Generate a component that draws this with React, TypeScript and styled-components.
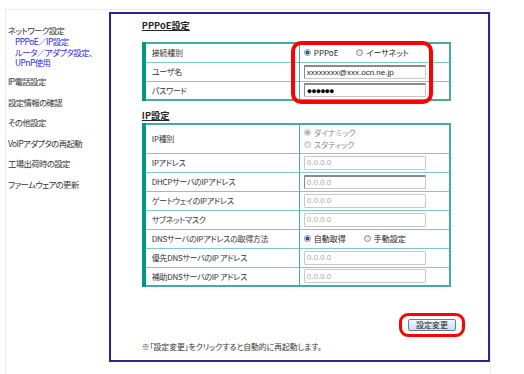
import styled, { createGlobalStyle } from 'styled-components'

const GlobalStyle = createGlobalStyle`
  body {
    margin: 0;
    background: #fff;
    font-family: 'Noto Sans CJK JP', 'DejaVu Sans', sans-serif;
    font-feature-settings: 'palt';
    color: #333;
  }
`

const Frame = styled.div`
  margin: 9px 0 0 5px;
  width: 484px;
  height: 370px;
  border: 1px solid #ececec;
  border-bottom: none;
  display: flex;
  align-items: flex-start;
`

const Sidebar = styled.nav`
  width: 107px;
  padding: 15px 0 0 2px;
  display: flex;
  flex-direction: column;
`

const NavItem = styled.div`
  font-size: 8.4px;
  letter-spacing: -0.6px;
  line-height: 10px;
  height: 10px;
  margin-bottom: 10.6px;
  color: #333;
  white-space: nowrap;
`

const SubNav = styled.div`
  display: flex;
  flex-direction: column;
  padding-left: 7px;
  margin: -9.5px 0 8.5px;
`

const SubLink = styled.a`
  font-size: 8.4px;
  letter-spacing: -0.5px;
  line-height: 10.5px;
  color: #2a2ae8;
  text-decoration: none;
  white-space: nowrap;
`

const Panel = styled.main`
  margin: 2px 0 0 1px;
  width: 371px;
  height: 346px;
  border: 2px solid #28288f;
  padding: 0 0 0 31px;
  display: flex;
  flex-direction: column;
`

const Heading = styled.h2<{ $top: number }>`
  margin: ${({ $top }) => $top}px 0 0;
  height: 12px;
  font-size: 9.2px;
  line-height: 12px;
  font-weight: bold;
  color: #222;
  text-decoration: underline;
`

const TableWrap = styled.div<{ $top: number }>`
  position: relative;
  margin-top: ${({ $top }) => $top}px;
  width: 309px;
`

const Table = styled.table`
  width: 309px;
  border-collapse: collapse;
  table-layout: fixed;
  border-top: 2px solid #45aca5;
  border-right: 2px solid #45aca5;
  border-bottom: 2px solid #45aca5;
  border-left: 4px solid #00968a;
`

const Row = styled.tr<{ $h?: number }>`
  height: ${({ $h }) => $h ?? 19}px;
  border-bottom: 1px solid #7ccbc4;
  &:last-child {
    border-bottom: none;
  }
`

const Label = styled.td`
  width: 147px;
  padding: 0 0 0 6px;
  border-right: 1px solid #45aca5;
  font-size: 8px;
  letter-spacing: -0.3px;
  color: #333;
  white-space: nowrap;
  vertical-align: middle;
`

const Value = styled.td`
  padding: 0 0 0 4px;
  vertical-align: middle;
`

const Field = styled.input<{ $inset?: boolean; $dim?: boolean }>`
  display: block;
  box-sizing: border-box;
  width: 122px;
  height: 14px;
  padding: 0 2px;
  margin: 0;
  font-family: 'Liberation Sans', Arial, sans-serif;
  font-size: 8px;
  color: ${({ $dim }) => ($dim ? '#a8a8a8' : '#222')};
  background: #fff;
  border: 1px solid #c8c8c8;
  border-top-color: ${({ $inset }) => ($inset ? '#8a8a8a' : '#c8c8c8')};
  border-left-color: ${({ $inset }) => ($inset ? '#8a8a8a' : '#c8c8c8')};
  border-top-width: ${({ $inset }) => ($inset ? 2 : 1)}px;
  border-radius: 1px;
  outline: none;
`

const Password = styled(Field)`
  font-size: 9px;
  letter-spacing: -1px;
  color: #000;
  font-weight: bold;
`

const Radios = styled.div<{ $column?: boolean }>`
  display: flex;
  flex-direction: ${({ $column }) => ($column ? 'column' : 'row')};
  gap: ${({ $column }) => ($column ? 2 : 18)}px;
`

const RadioOption = styled.label<{ $disabled?: boolean }>`
  display: flex;
  align-items: center;
  gap: 3px;
  font-size: 8px;
  line-height: 10px;
  color: ${({ $disabled }) => ($disabled ? '#8a8a8a' : '#222')};
  white-space: nowrap;
`

const Dot = styled.span<{ $checked?: boolean; $disabled?: boolean }>`
  box-sizing: border-box;
  width: 7px;
  height: 7px;
  border-radius: 50%;
  border: 1px solid ${({ $disabled }) => ($disabled ? '#c4c4c4' : '#8c8c8c')};
  background: ${({ $checked, $disabled }) =>
    $checked
      ? $disabled
        ? 'radial-gradient(circle, #a8a8a8 0 1.5px, #e6e6e6 2px)'
        : 'radial-gradient(circle, #1e4fa8 0 1.6px, #dfe9f5 2.1px)'
      : 'linear-gradient(#dcdcdc, #f8f8f8)'};
`

const Ring = styled.div`
  position: absolute;
  left: 149px;
  top: -1px;
  width: 142px;
  height: 63px;
  box-sizing: border-box;
  border: 4px solid #f00;
  border-radius: 10px;
  pointer-events: none;
`

const Actions = styled.div`
  margin-top: 26px;
  padding-right: 23px;
  display: flex;
  justify-content: flex-end;
`

const ButtonRing = styled.div`
  box-sizing: border-box;
  width: 66px;
  height: 24px;
  border: 3px solid #f00;
  border-radius: 9px;
  display: flex;
  align-items: center;
  justify-content: center;
`

const Button = styled.button`
  box-sizing: border-box;
  width: 48px;
  height: 12px;
  padding: 0;
  border: 1px solid #6e7e90;
  border-radius: 2px;
  background: linear-gradient(#f2f7fc, #c6dcf2);
  font-family: inherit;
  font-size: 8px;
  line-height: 10px;
  color: #222;
`

const Note = styled.p`
  margin: 5px 0 0;
  font-size: 7.8px;
  line-height: 10px;
  color: #333;
  white-space: nowrap;
`

const Radio = ({ label, checked, disabled }: { label: string; checked?: boolean; disabled?: boolean }) => (
  <RadioOption $disabled={disabled}>
    <Dot $checked={checked} $disabled={disabled} />
    {label}
  </RadioOption>
)

const ipRows = [
  { label: 'IPアドレス' },
  { label: 'DHCPサーバのIPアドレス', inset: true },
  { label: 'ゲートウェイのIPアドレス' },
  { label: 'サブネットマスク' },
]

const dnsRows = ['優先DNSサーバのIP アドレス', '補助DNSサーバのIP アドレス']

const navItems = ['IP電話設定', '設定情報の確認', 'その他設定', 'VoIPアダプタの再起動', '工場出荷時の設定', 'ファームウェアの更新']

export default function App() {
  return (
    <>
      <GlobalStyle />
      <Frame>
        <Sidebar>
          <NavItem>ネットワーク設定</NavItem>
          <SubNav>
            <SubLink>PPPoE／IP設定</SubLink>
            <SubLink>ルータ／アダプタ設定、</SubLink>
            <SubLink>UPnP使用</SubLink>
          </SubNav>
          {navItems.map((item) => (
            <NavItem key={item}>{item}</NavItem>
          ))}
        </Sidebar>
        <Panel>
          <Heading $top={5}>PPPoE設定</Heading>
          <TableWrap $top={11}>
            <Table>
              <tbody>
                <Row>
                  <Label>接続種別</Label>
                  <Value>
                    <Radios>
                      <Radio label="PPPoE" checked />
                      <Radio label="イーサネット" />
                    </Radios>
                  </Value>
                </Row>
                <Row>
                  <Label>ユーザ名</Label>
                  <Value>
                    <Field $inset readOnly value="xxxxxxxx@xxx.ocn.ne.jp" />
                  </Value>
                </Row>
                <Row>
                  <Label>パスワード</Label>
                  <Value>
                    <Password $inset readOnly value="●●●●●●" />
                  </Value>
                </Row>
              </tbody>
            </Table>
            <Ring />
          </TableWrap>
          <Heading $top={8}>IP設定</Heading>
          <TableWrap $top={2}>
            <Table>
              <tbody>
                <Row $h={29}>
                  <Label>IP種別</Label>
                  <Value>
                    <Radios $column>
                      <Radio label="ダイナミック" checked disabled />
                      <Radio label="スタティック" disabled />
                    </Radios>
                  </Value>
                </Row>
                {ipRows.map((r) => (
                  <Row key={r.label}>
                    <Label>{r.label}</Label>
                    <Value>
                      <Field $inset={r.inset} $dim readOnly value="0.0.0.0" />
                    </Value>
                  </Row>
                ))}
                <Row>
                  <Label>DNSサーバのIPアドレスの取得方法</Label>
                  <Value>
                    <Radios>
                      <Radio label="自動取得" checked />
                      <Radio label="手動設定" />
                    </Radios>
                  </Value>
                </Row>
                {dnsRows.map((label) => (
                  <Row key={label}>
                    <Label>{label}</Label>
                    <Value>
                      <Field $dim readOnly value="0.0.0.0" />
                    </Value>
                  </Row>
                ))}
              </tbody>
            </Table>
          </TableWrap>
          <Actions>
            <ButtonRing>
              <Button>設定変更</Button>
            </ButtonRing>
          </Actions>
          <Note>※「設定変更」をクリックすると自動的に再起動します。</Note>
        </Panel>
      </Frame>
    </>
  )
}
